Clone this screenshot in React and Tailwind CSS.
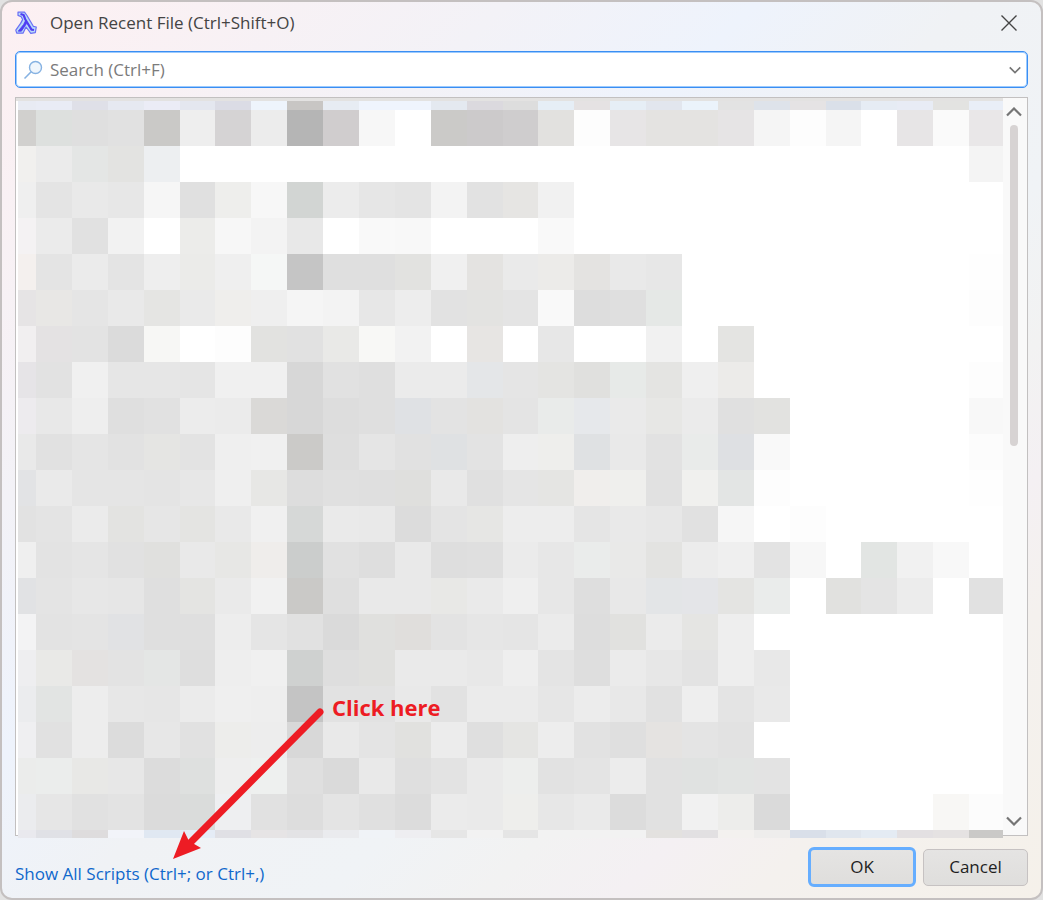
import React, { useState } from "react";

// One line per mosaic row: two digits are a gray level, six a full colour,
// "--" lets the background through. Cells missing at the end are empty too.
const MOSAIC = [
  "e8ebf3 e9ecf5 dfe0e8 e6e9f1 ebecf6 e4e7ef dbdce5 eef4fc c8c6c4 e7ecf3 eff4fd eff4fd e4e9f0 dbd9de dd e6eef6 e5e2e3 e6eef6 e2e6ee ebf3fb e3 dee3ea e5e3e4 dae0e9 e6ecf4 e8ecf5 e3e3e1 e9eef7",
  "d1d0ce dde0de df e1 cac9c7 ee d5d3d4 ec b5 d0cdce f7 -- cbcac8 cccacb cfcdce e2e1df fd e7e5e6 e4e3e1 e4e3e1 e6e4e5 f5 fd f5 -- e7e5e6 fa e9e7e8",
  "f1f0ee eb e4e6e5 e3e3e1 edeff1 -- -- -- -- -- -- -- -- -- -- -- -- -- -- -- -- -- -- -- -- -- -- f4",
  "ef e4 e9 e7 f6 e0 eeeeec f7 d2d5d3 ec e6 e4 f3 e2 e6e5e3 f1",
  "f4f2f3 eb e1 f2 -- ececea f7 f3 e8 -- f9 f8 -- -- -- f9",
  "f4f0ee e4 eb e4 ee ebebe9 ef f5f7f6 c5 df df e2e2e0 f0 e4e3e1 ea ecebe9 e4e3e1 e9 e7 -- -- -- -- -- -- -- -- fe",
  "e6e4e5 e8e7e5 e5 e9 e5e5e3 ea efeeec ef f5 f3 e7 ed e2 e3e3e1 e4 f9 dd df e5e8e6 -- -- -- -- -- -- -- -- fd",
  "f1eff0 e4e2e3 e3 db f7f7f5 -- fd e2e2e0 e1 e9e9e7 f8f8f6 f2 -- e7e5e3 -- e7 -- -- f1 -- e4e4e2",
  "e6e4e7 e2 f0 e6 e6 e5 f0 f0 d7 e1 df eb eb e4e6e8 e5 e4e4e2 e0e0de e7eae8 e4e4e2 ef ecebe9 -- -- -- -- -- -- fd",
  "edebee e8 ee df e1 ec eb dad9d7 d7 dd df dfe1e4 e3 e3e2e0 e4 e9ebea e6e8eb ea e7e7e5 eb e0 e2e2e0 -- -- -- -- -- f8",
  "e9 e1 e5 e2 e5e5e3 e3 ef f0 cbcac8 de e5 e1 dfe1e3 e3 ee eeeeec dfe1e3 e9 e2 e9ebea dee0e3 f9 -- -- -- -- -- fc",
  "e2e3e5 ea e5 e5 e4 e7 ef e7e7e5 dd e0 df dfdfdd e9 e0 e5 e5e5e3 f0eeec efefed e1 f0f0ee e3e5e4 fd -- -- -- -- -- fe",
  "e2 e4 eb e3e3e1 e6 e4e4e2 e9 f0 d6d8d7 ea e9 dc e4 e6e6e4 ed ed e5 e9 e7 e1 f6 -- fd",
  "ef e3 e5 e1 e0e0de e9 e7e7e5 efedeb cbcdcc e1 de e9 de df eb e7 eaeceb e9e9e8 e3e3e1 ec ef e3 f7 -- e2e5e3 f1 f8",
  "e1e2e4 e4 e7 e6 df e4e4e2 ea f1 cac9c7 df e9 e9 e8e8e6 ea ef e7 de e8 e3e5e7 e4e5e8 e4e4e2 eaeceb -- e1e1df e4 ec -- e1",
  "f3f3f4 e3 e4 e1e2e4 df df ed e5 e1 da e0e0de e0dedc e3 e6 e5 eb dd e1e1df eb e5e5e3 ee",
  "eeeef0 e9e9e7 e4e2e1 e3 e4e6e5 de ee f0 cfd1d0 de e0e0de ea ea e8 ee e4 de eb e7 e3 ee e8",
  "ebecee e2e4e3 ed e7 e6 eb ef ee c4 e2 e2 e9 e2 eb eb e6 ec e8 e1 ee e4 e9",
  "efeff1 e1 ed dc e7 e1 ededeb ed d8 e9 e4 e1e1df ec df e5e5e3 ed e2 df e5e3e1 e4 e2",
  "ebeceb ebedec e8e8e6 e7 dc dee0df ee eef0ef df da e9 df e3 ea edeeed e2 e4 ec e1 e0e2e1 e2e4e3 e3",
  "ebecee e6 e1 e3 db dadcdb eeeff1 e1 dd e4 e0 dc eb ea eeeeec e7 ea dc e1 f1 ededeb da -- -- -- -- f8f7f5 fc",
  "e9e9ee e0e1e6 dedcdd f2f4f9 e0e8f2 e5ecf6 e0e0e5 e6e4e5 e3e3e5 eaebee f0f3f7 eeeef1 e6 f2 e5 f2 f2 f2 e3e1df e2e0e2 f3f1ef eeedec d9dfe9 e0e6ee e4ebf3 e3e0e2 e5e2e2 cac9c7",
];

const COLUMNS = 28;

function cellColor(code) {
  if (!code || code === "--") return "transparent";
  return code.length === 2 ? `#${code}${code}${code}` : `#${code}`;
}

function Mosaic() {
  return (
    <div
      aria-hidden="true"
      className="grid grid-cols-[18fr_repeat(26,36fr)_34fr] grid-rows-[9px_repeat(20,36px)_8px]"
    >
      {MOSAIC.map((line, row) => {
        const codes = line.split(" ");
        return Array.from({ length: COLUMNS }, (_, col) => (
          <div
            key={`${row}-${col}`}
            style={{ backgroundColor: cellColor(codes[col]) }}
          />
        ));
      })}
    </div>
  );
}

function LambdaIcon() {
  return (
    <svg className="h-6 w-6 shrink-0" viewBox="0 0 24 24" fill="none" strokeLinejoin="round">
      <path
        d="M3 1.2H9.5L12 4.5L18.3 15.3L21.3 16L20.3 21.6L15.8 22.4L11 16L8 22.2H1.7L0.8 19.2L5.6 12.4L7.6 8.6L6.2 5.8L3 4.4Z"
        fill="#b9dbf8"
        stroke="#6a6ff5"
        strokeWidth="1.2"
      />
      <path d="M5.5 3L8.6 4L10.2 8.2L16.5 18.6L19 19" stroke="#4f3df3" strokeWidth="2.2" />
      <path d="M10.6 9.5L8.6 13.5L3.2 20.2H6.4L11.6 12.5Z" fill="#4f3df3" stroke="#4f3df3" strokeWidth="0.8" />
    </svg>
  );
}

function SearchIcon() {
  return (
    <svg className="h-5 w-5 shrink-0" viewBox="0 0 20 20" fill="none">
      <circle cx="12.5" cy="7.5" r="6" fill="#f0f6fc" stroke="#86b2e2" strokeWidth="1.4" />
      <path d="M8.2 11.8L1.5 18.5" stroke="#86b2e2" strokeWidth="1.6" />
    </svg>
  );
}

function Chevron({ up = false, className = "" }) {
  return (
    <svg className={className} viewBox="0 0 16 10" fill="none">
      <path
        d={up ? "M1 8.5L8 1.5L15 8.5" : "M1 1.5L8 8.5L15 1.5"}
        stroke="#757575"
        strokeWidth="2.2"
      />
    </svg>
  );
}

function Scrollbar() {
  return (
    <div className="flex w-6 shrink-0 flex-col items-center bg-[#f9f9f9] pt-[9px] pr-[2px] pb-[9px]">
      <button type="button" aria-label="Scroll up" className="block">
        <Chevron up className="h-[10px] w-4" />
      </button>
      <div className="mt-2 mb-2 w-2 flex-1">
        <div className="h-[47%] rounded-full bg-[#d7d3d3]" />
      </div>
      <button type="button" aria-label="Scroll down" className="block">
        <Chevron className="h-[10px] w-4" />
      </button>
    </div>
  );
}

// Red arrow and label lying over the dialog
function Annotation() {
  return (
    <div className="pointer-events-none absolute bottom-[39px] left-[170px] text-[#ed1c24]">
      <svg className="block h-[156px] w-[156px]" viewBox="0 0 156 156" fill="none">
        <path d="M148 9L18 140" stroke="currentColor" strokeWidth="7" strokeLinecap="round" />
        <path d="M1 156L12 128L17 138L29 145Z" fill="currentColor" />
      </svg>
      <span className="absolute top-[-10px] left-40 text-[22px] leading-7 font-bold whitespace-nowrap">
        Click here
      </span>
    </div>
  );
}

export default function App() {
  const [query, setQuery] = useState("");

  return (
    <div className="min-h-screen bg-[#e2e2e2] font-['Open_Sans','Noto_Sans',sans-serif] text-[17px] leading-6">
      <div
        role="dialog"
        aria-labelledby="dialog-title"
        className="relative flex min-h-screen flex-col rounded-xl border-2 border-[#c4c0c0] bg-[linear-gradient(135deg,#fdf0f2_0%,#f3f2f7_26%,#eef3fc_39%,#f0f2f5_50%,#f0f3f6_63%,#f2f2f2_71%,#f4f0f3_78%,#f4f1ee_85%,#f5f1ea_100%)] px-[13px]"
      >
        {/* Title bar */}
        <header className="flex h-[49px] items-center pb-2">
          <LambdaIcon />
          <h1 id="dialog-title" className="ml-[11px] flex-1 text-[#444]">
            Open Recent File (Ctrl+Shift+O)
          </h1>
          <button type="button" aria-label="Close" className="mr-[11px]">
            <svg className="h-4 w-4" viewBox="0 0 16 16" fill="none">
              <path d="M0.5 0.5L15.5 15.5M15.5 0.5L0.5 15.5" stroke="#444" strokeWidth="1.4" />
            </svg>
          </button>
        </header>

        {/* Search box */}
        <div className="flex h-[37px] items-center rounded-[5px] border border-[#3a8ef3] bg-white pr-[6px] pl-[7px] inset-ring inset-ring-[#9ccafd]">
          <SearchIcon />
          <input
            type="text"
            aria-label="Search"
            placeholder="Search (Ctrl+F)"
            value={query}
            onChange={(e) => setQuery(e.target.value)}
            className="ml-[7px] min-w-0 flex-1 bg-transparent text-[#444] outline-none placeholder:text-[#7b7b7b]"
          />
          <button type="button" aria-label="Search history">
            <Chevron className="h-2 w-3" />
          </button>
        </div>

        {/* File list */}
        <div className="mt-[9px] flex h-[739px] border border-[#c2c0c0] bg-white">
          <div className="min-w-0 flex-1 pl-[2px]">
            <div className="-ml-[2px] h-[3px] bg-[#e3e2e1]" />
            <Mosaic />
          </div>
          <Scrollbar />
        </div>

        {/* Footer */}
        <footer className="flex flex-1 items-center gap-[7px] pt-[11px] pb-[11px]">
          <a href="#scripts" className="mt-[14px] mr-auto text-[#0f68cc]">
            Show All Scripts (Ctrl+; or Ctrl+,)
          </a>
          <button
            type="button"
            className="h-10 w-[108px] rounded-md border-3 border-[#66aeff] bg-linear-to-b from-[#e5e4e3] to-[#dfdedc] text-[#1f1f1f]"
          >
            OK
          </button>
          <button
            type="button"
            className="h-[37px] w-[105px] rounded-[5px] border border-[#c6c2c2] bg-linear-to-b from-[#e5e4e3] to-[#dfdedc] text-[#1f1f1f]"
          >
            Cancel
          </button>
        </footer>

        <Annotation />
      </div>
    </div>
  );
}
